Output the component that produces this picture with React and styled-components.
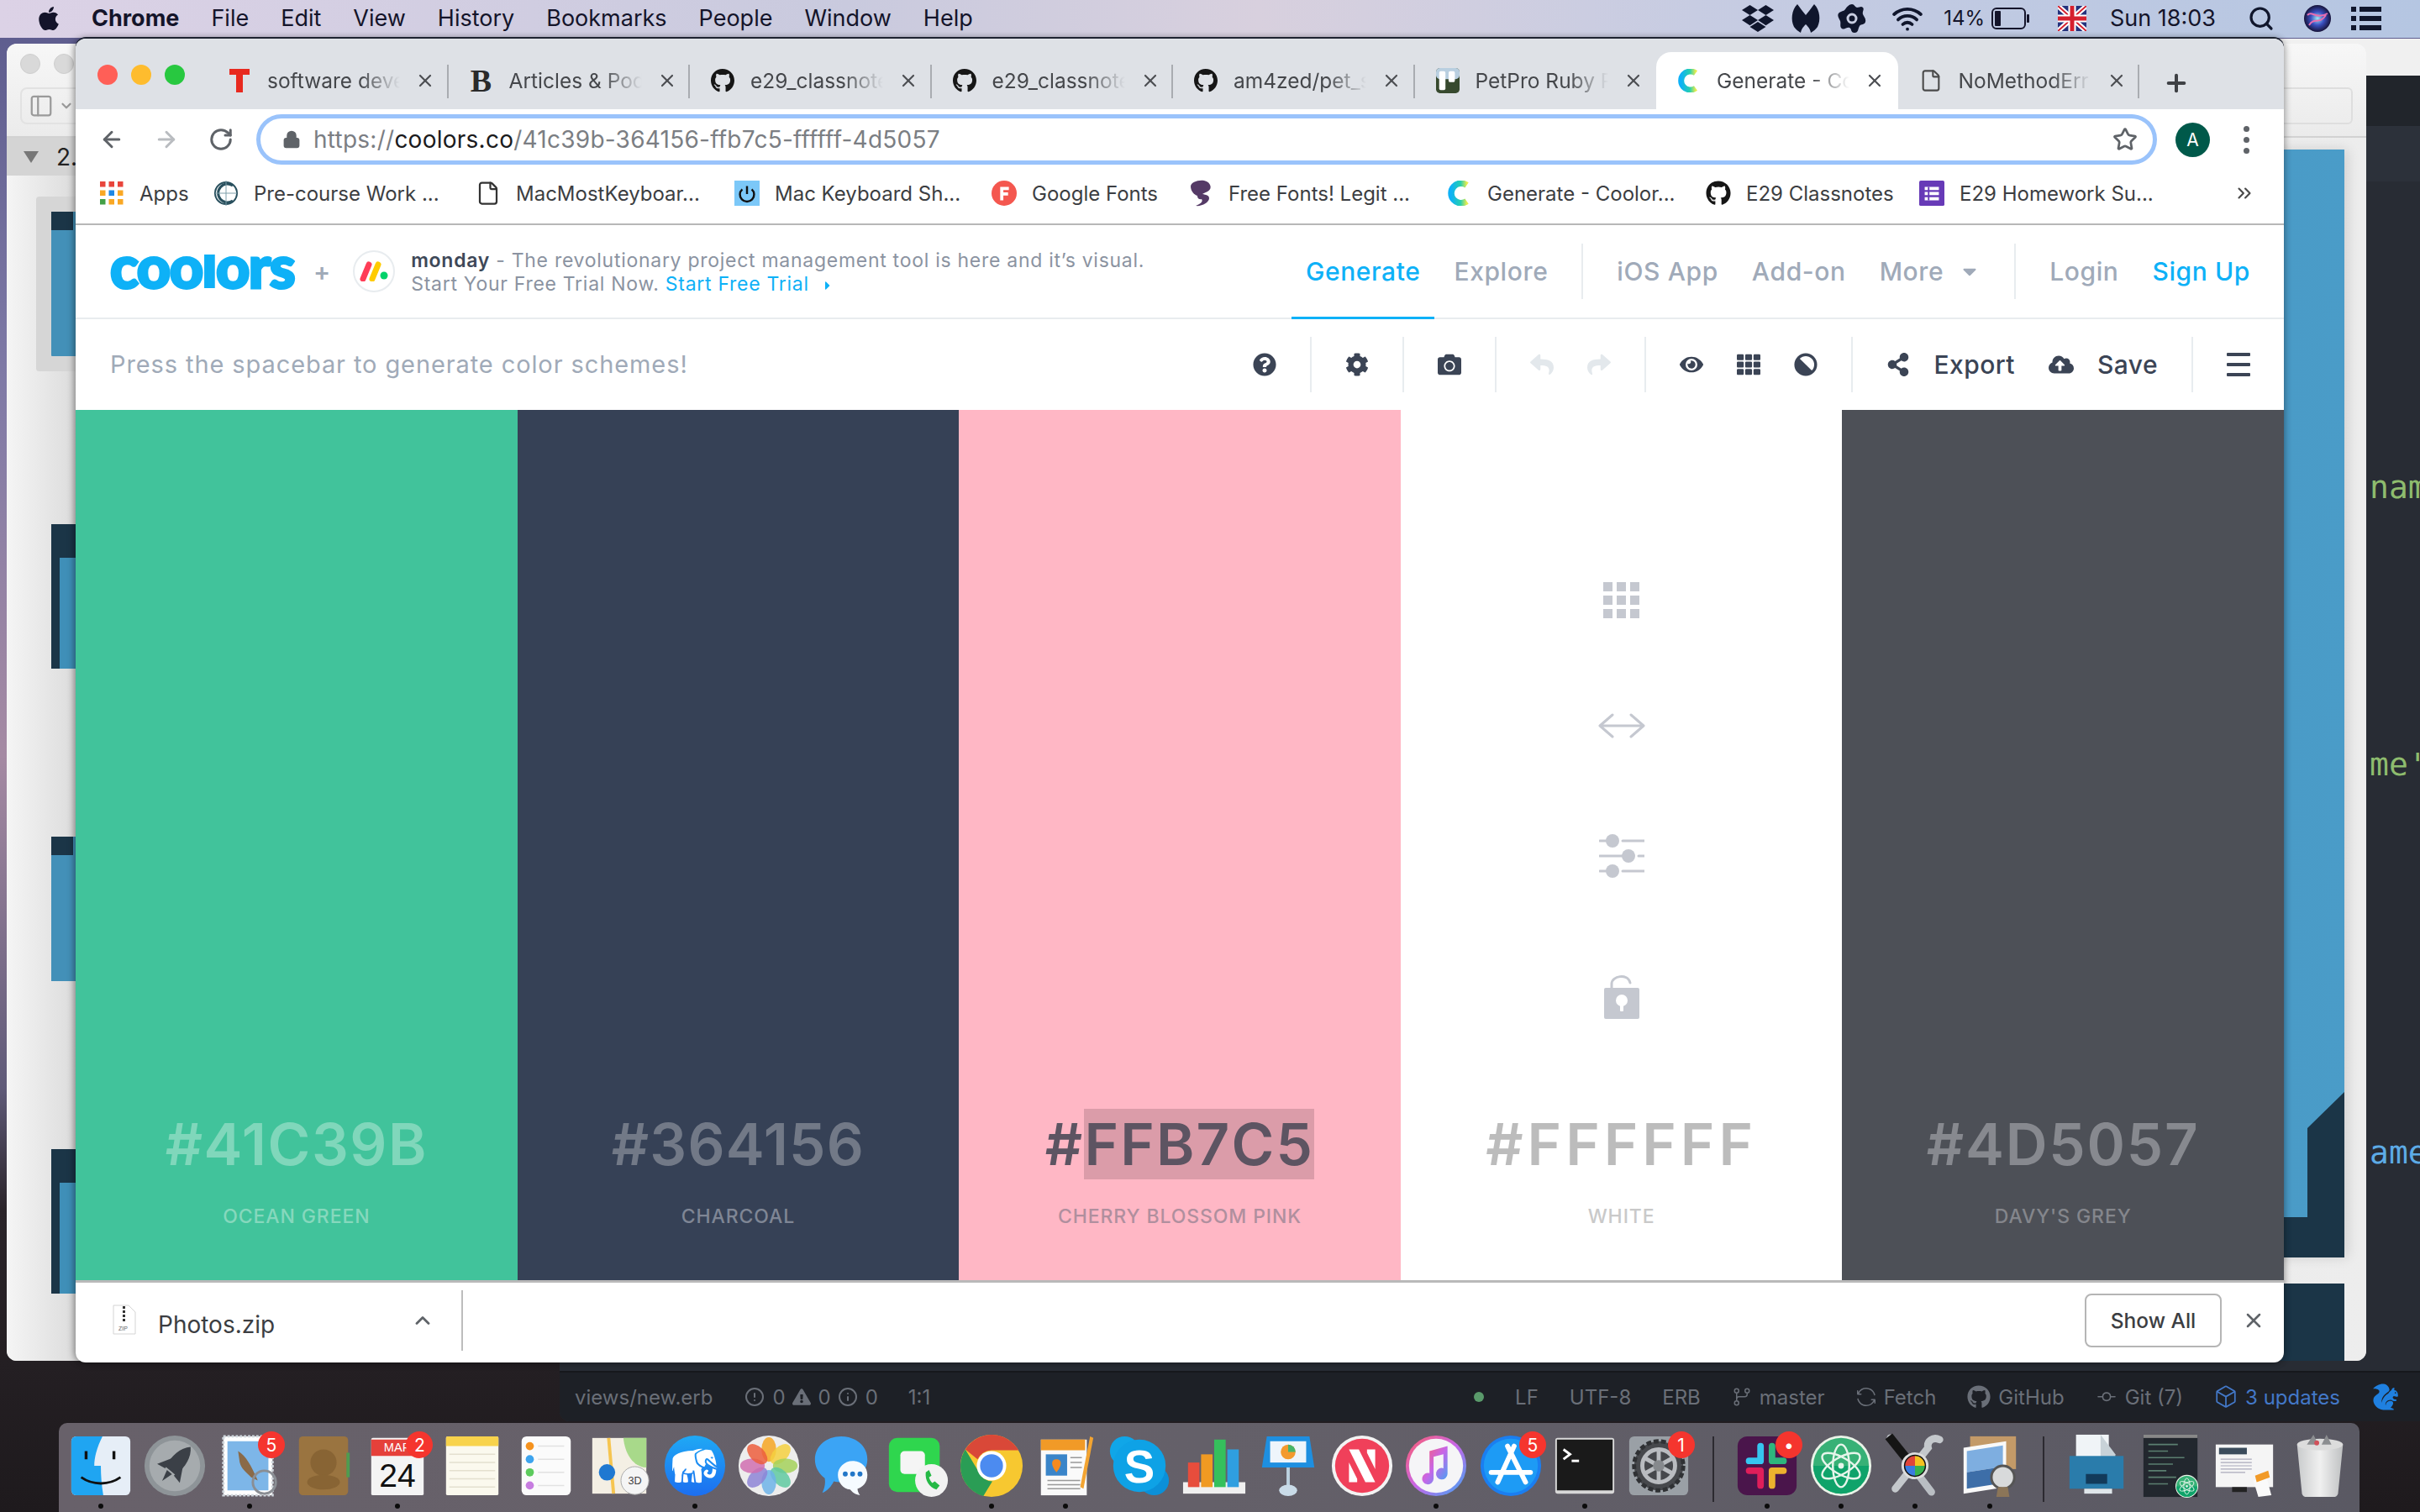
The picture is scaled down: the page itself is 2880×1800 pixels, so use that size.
import React from "react";
import styled, { createGlobalStyle } from "styled-components";
import { ArrowLeft, ArrowRight, RotateCw, Star, Lock, X, Plus, ChevronsRight, ChevronUp, ChevronDown, Search, Wifi, CircleAlert, Info, File, PanelLeft } from "lucide-react";
import { FaApple, FaGithub, FaDropbox, FaQuestionCircle, FaCog, FaCamera, FaReply, FaShare, FaEye, FaTh, FaAdjust, FaShareAlt, FaCloudUploadAlt, FaCaretRight, FaCaretDown, FaExclamationTriangle } from "react-icons/fa";
import { GoGitBranch, GoGitCommit, GoPackage, GoSync } from "react-icons/go";
import { GiSquirrel, GiElephant } from "react-icons/gi";

const UI = `Inter, "Liberation Sans", sans-serif`;
const GOTHAM = `Inter, "Open Sans", sans-serif`;

const GlobalStyle = createGlobalStyle`
  * { box-sizing: border-box; margin: 0; padding: 0; }
  html, body { width: 2880px; height: 1800px; overflow: hidden; background: #1c181b; }
  body { font-family: ${UI}; }
`;

const Desktop = styled.div`
  position: relative;
  width: 2880px;
  height: 1800px;
  overflow: hidden;
  background: linear-gradient(180deg, #5b5a8c 0%, #7f7aa6 25%, #a58aa3 50%, #5f5a78 72%, #2a2429 80%, #1e1a1d 100%);
`;

/* ---------- menu bar ---------- */
const MenuBar = styled.div`
  height: 45px;
  padding: 0 0 2px 42px;
  display: flex;
  align-items: center;
  background: linear-gradient(90deg, #dcd2e6 0%, #c9cade 35%, #d8d0de 52%, #c7cce2 70%, #b5c6e2 100%);
  color: #14142a;
  font-size: 27px;
`;
const MenuItems = styled.div`
  display: flex;
  align-items: center;
  gap: 38px;
  margin-left: 35px;
`;
const MenuItem = styled.span`
  font-weight: ${p => (p.$bold ? 700 : 400)};
`;
const MenuRight = styled.div`
  margin-left: auto;
  display: flex;
  align-items: center;
  padding-right: 46px;
  svg { display: block; }
`;
const Tray = styled.span`
  display: flex;
  align-items: center;
  margin-left: ${p => p.$gap}px;
  font-size: ${p => p.$size || 24}px;
  gap: 8px;
`;

/* ---------- back window (keynote) ---------- */
const BackWindow = styled.div`
  position: absolute;
  left: 8px;
  top: 52px;
  width: 2808px;
  height: 1568px;
  border-radius: 12px;
  overflow: hidden;
  background: #ececec;
  display: flex;
  flex-direction: column;
`;
const BackBar = styled.div`
  height: 112px;
  flex: none;
  background: linear-gradient(180deg, #f7f7f7, #ebebeb);
  border-bottom: 2px solid #d2d2d2;
  padding: 12px 16px 0 16px;
  display: flex;
  justify-content: space-between;
`;
const BackBarLeft = styled.div`
  display: flex;
  flex-direction: column;
  gap: 16px;
`;
const GreyDots = styled.div`
  display: flex;
  gap: 16px;
  span { width: 24px; height: 24px; border-radius: 50%; background: #d9d9d9; border: 1px solid #cecece; }
`;
const ViewButton = styled.div`
  width: 120px;
  height: 44px;
  border: 2px solid #e2e2e2;
  border-radius: 8px;
  display: flex;
  align-items: center;
  padding-left: 8px;
  gap: 6px;
  color: #9a9a9a;
`;
const BackSearch = styled.div`
  width: 130px;
  height: 44px;
  margin-top: 40px;
  border: 2px solid #dedede;
  border-radius: 6px;
`;
const BackBody = styled.div`
  flex: 1;
  display: flex;
  min-height: 0;
`;
const Sidebar = styled.div`
  width: 380px;
  flex: none;
  background: linear-gradient(90deg, #f5f5f5 0, #dcdcdc 82px);
`;
const SidebarBand = styled.div`
  height: 45px;
  background: #d4d4d4;
  display: flex;
  align-items: center;
  padding-left: 20px;
  gap: 21px;
  font-size: 28px;
  color: #222;
`;
const Triangle = styled.span`
  width: 0;
  height: 0;
  border-left: 9px solid transparent;
  border-right: 9px solid transparent;
  border-top: 14px solid #777;
`;
const Thumbs = styled.div`
  padding: 43px 0 0 53px;
  display: flex;
  flex-direction: column;
  gap: 200px;
`;
const Thumb = styled.div`
  position: relative;
  width: 300px;
  height: 172px;
  background: ${p => (p.$dark ? "#1b3547" : "#4390b8")};
  &::before {
    content: "";
    position: absolute;
    inset: ${p => (p.$dark ? "40px 0 0 10px" : "0 auto auto 0")};
    width: ${p => (p.$dark ? "auto" : "26px")};
    height: ${p => (p.$dark ? "auto" : "22px")};
    background: ${p => (p.$dark ? "#3f8fb8" : "#1b3547")};
  }
  ${p => p.$selected && `box-shadow: 0 0 0 18px #d6d6d6; border-radius: 1px;`}
`;
const BackMain = styled.div`
  flex: 1;
  display: flex;
  flex-direction: column;
  align-items: flex-end;
  padding: 14px 26px 0 0;
  gap: 31px;
  background: linear-gradient(90deg, #dcdcdc, #ededed);
`;
const BigSlide = styled.div`
  position: relative;
  width: 1000px;
  height: 1319px;
  flex: none;
  background: linear-gradient(90deg, #3a80a6 0, #3f88ae 85%, #4a9bc7 93%, #4a9cc8 100%);
  box-shadow: 4px 0 14px rgba(0, 0, 0, .12);
`;
const SlideCorner = styled.svg`
  position: absolute;
  right: 0;
  bottom: 0;
`;
const NextSlide = styled.div`
  width: 1000px;
  flex: 1;
  background: #1b3547;
`;

/* ---------- atom window ---------- */
const AtomWindow = styled.div`
  position: absolute;
  left: 666px;
  top: 46px;
  right: 0;
  height: 1646px;
  border-radius: 12px 0 0 12px;
  overflow: hidden;
  background: #282c34;
  display: flex;
  flex-direction: column;
`;
const AtomTitle = styled.div`
  height: 44px;
  background: #f0f0f0;
  flex: none;
`;
const AtomTabs = styled.div`
  height: 60px;
  flex: none;
  background: #21252b;
`;
const AtomPanel = styled.div`
  height: 66px;
  flex: none;
  background: #2c313a;
`;
const Editor = styled.div`
  flex: 1;
  padding-left: 2154px;
  font-family: "DejaVu Sans Mono", monospace;
  font-size: 38px;
  line-height: 48px;
  white-space: nowrap;
`;
const CodeLine = styled.div`
  color: ${p => p.$color};
  margin-top: ${p => p.$top}px;
`;
const StatusBar = styled.div`
  height: 60px;
  flex: none;
  background: #1d2026;
  border-top: 2px solid #16181c;
  color: #6a6f78;
  font-size: 24px;
  display: flex;
  align-items: center;
  padding: 0 24px 0 18px;
  svg { display: block; }
`;
const StatusLeft = styled.div`
  display: flex;
  align-items: center;
  gap: 8px;
`;
const StatusRight = styled.div`
  margin-left: auto;
  display: flex;
  align-items: center;
  gap: 37px;
`;
const StatusItem = styled.span`
  display: flex;
  align-items: center;
  gap: 9px;
  color: ${p => p.$color || "inherit"};
  margin-left: ${p => p.$gap || 0}px;
`;
const GreenDot = styled.span`
  width: 12px;
  height: 12px;
  border-radius: 50%;
  background: #5a9a6b;
`;

/* ---------- chrome window ---------- */
const ChromeWindow = styled.div`
  position: absolute;
  left: 90px;
  top: 46px;
  width: 2628px;
  height: 1576px;
  border-radius: 12px;
  overflow: hidden;
  background: #fff;
  box-shadow: 0 -2px 0 #1d2230, -2px 0 8px rgba(0, 0, 0, .35), 2px 0 8px rgba(0, 0, 0, .2);
  display: flex;
  flex-direction: column;
`;
const TabStrip = styled.div`
  height: 84px;
  flex: none;
  background: #dee1e6;
  padding: 16px 0 0 26px;
  display: flex;
  align-items: flex-end;
`;
const Lights = styled.div`
  display: flex;
  gap: 16px;
  align-self: flex-start;
  margin: 15px 26px 0 0;
`;
const Light = styled.span`
  width: 24px;
  height: 24px;
  border-radius: 50%;
  background: ${p => p.$c};
`;
const Tab = styled.div`
  position: relative;
  width: 287.5px;
  height: 68px;
  flex: none;
  display: flex;
  align-items: center;
  padding-left: 25px;
  font-size: 24.5px;
  color: #45474b;
  background: ${p => (p.$active ? "#fff" : "transparent")};
  border-radius: 18px 18px 0 0;
  &::after {
    content: "";
    display: ${p => (p.$noSep ? "none" : "block")};
    position: absolute;
    right: 0;
    top: 15px;
    height: 40px;
    width: 2px;
    background: #a9acb1;
  }
`;
const TabIcon = styled.span`
  width: 28px;
  height: 32px;
  flex: none;
  display: flex;
  align-items: center;
  justify-content: center;
  margin-right: 19px;
`;
const TabLabel = styled.span`
  width: 158px;
  flex: none;
  overflow: hidden;
  white-space: nowrap;
  -webkit-mask-image: linear-gradient(90deg, #000 70%, transparent 100%);
  mask-image: linear-gradient(90deg, #000 70%, transparent 100%);
`;
const TabClose = styled.span`
  margin-left: 18px;
  display: flex;
  color: #4c4e52;
`;
const NewTab = styled.span`
  align-self: center;
  margin: 6px 0 0 28px;
  display: flex;
  color: #3f4145;
`;

const Toolbar = styled.div`
  height: 72px;
  flex: none;
  display: flex;
  align-items: center;
  padding-left: 28px;
  color: #5f6368;
`;
const NavBtn = styled.span`
  width: ${p => p.$w || 65}px;
  flex: none;
  display: flex;
  color: ${p => (p.$off ? "#b9bcc0" : "#5f6368")};
`;
const AddressBar = styled.div`
  width: 2262px;
  height: 60px;
  flex: none;
  border: 5px solid #9ac3fb;
  border-radius: 30px;
  display: flex;
  align-items: center;
  padding: 0 18px 0 26px;
  font-size: 28px;
  color: #7b7e83;
`;
const Url = styled.span`
  margin-left: 15px;
  letter-spacing: .25px;
  b { font-weight: 400; color: #1b1b1d; }
`;
const AddrStar = styled.span`
  margin-left: auto;
  display: flex;
  color: #5f6368;
`;
const Avatar = styled.span`
  width: 41px;
  height: 41px;
  margin-left: 22px;
  flex: none;
  border-radius: 50%;
  background: #00594a;
  color: #fff;
  font-size: 21px;
  display: flex;
  align-items: center;
  justify-content: center;
`;
const Dots = styled.span`
  margin-left: 40px;
  display: flex;
  flex-direction: column;
  gap: 6px;
  span { width: 7px; height: 7px; border-radius: 50%; background: #5f6368; }
`;

const Bookmarks = styled.div`
  height: 66px;
  flex: none;
  border-bottom: 2px solid #b7b7b7;
  padding: 0 0 8px 28px;
  display: flex;
  align-items: center;
  font-size: 24px;
  color: #3c3e42;
`;
const Bookmark = styled.span`
  width: ${p => p.$w}px;
  flex: none;
  display: flex;
  align-items: center;
  white-space: nowrap;
`;
const BookmarkIcon = styled.span`
  width: 30px;
  height: 32px;
  flex: none;
  display: flex;
  align-items: center;
  justify-content: center;
  margin-right: 18px;
`;
const More = styled.span`
  margin-left: auto;
  margin-right: 34px;
  display: flex;
`;

/* ---------- coolors ---------- */
const Header = styled.div`
  height: 112px;
  flex: none;
  display: flex;
  align-items: center;
  padding: 0 40px 0 41px;
  border-bottom: 2px solid #e8ecef;
`;
const Logo = styled.div`
  font-family: Lato, sans-serif;
  font-weight: 900;
  font-size: 70px;
  line-height: 1;
  width: 218px;
  color: #0eb1f7;
  -webkit-text-stroke: 3px #0eb1f7;
  letter-spacing: -1.5px;
  white-space: nowrap;
  margin-top: -14px;
`;
const LogoL = styled.span`
  display: inline-block;
  transform: scaleY(.72);
  transform-origin: 50% 85%;
`;
const Join = styled.span`
  margin: 0 27px 0 24px;
  color: #a0aab8;
  font-size: 30px;
  font-weight: 600;
`;
const MondayBadge = styled.span`
  width: 50px;
  height: 50px;
  flex: none;
  border: 2px solid #e8ecef;
  border-radius: 50%;
  display: flex;
  align-items: center;
  justify-content: center;
`;
const Promo = styled.div`
  margin: 2px 0 0 19px;
  font-family: ${GOTHAM};
  font-size: 23px;
  line-height: 28px;
  letter-spacing: .72px;
  color: #8b93a1;
  b { color: #3e4858; font-weight: 600; }
`;
const PromoLink = styled.span`
  color: #0eb1f7;
  svg { margin-left: 14px; vertical-align: -2px; }
`;
const Nav = styled.nav`
  margin-left: auto;
  align-self: stretch;
  display: flex;
  align-items: center;
  gap: 40px;
  font-family: ${GOTHAM};
  font-size: 30px;
  font-weight: 500;
  letter-spacing: .6px;
  color: #a0aab9;
`;
const NavLink = styled.span`
  color: ${p => (p.$blue ? "#0eb1f7" : "inherit")};
  display: flex;
  align-items: center;
  gap: 18px;
`;
const NavActive = styled.span`
  align-self: stretch;
  margin: 0 -17px -2px 0;
  padding: 0 17px;
  border-bottom: 3px solid #0eb1f7;
  color: #0eb1f7;
  display: flex;
  align-items: center;
`;
const NavDivider = styled.span`
  width: 2px;
  height: 66px;
  background: #e8ecef;
`;

const ActionBar = styled.div`
  height: 108px;
  flex: none;
  display: flex;
  align-items: center;
  padding-left: 41px;
`;
const Hint = styled.span`
  font-family: ${GOTHAM};
  font-size: 29px;
  color: #a0aab8;
  letter-spacing: .9px;
  margin-top: -2px;
`;
const Actions = styled.div`
  margin-left: auto;
  display: flex;
  align-items: center;
  color: #3b4455;
  font-family: ${GOTHAM};
  font-size: 30px;
  font-weight: 500;
  letter-spacing: .45px;
`;
const Group = styled.div`
  display: flex;
  align-items: center;
  gap: ${p => p.$gap || 0}px;
  padding: 0 40px;
  height: 66px;
  border-left: ${p => (p.$first ? "none" : "2px solid #e8ecef")};
  color: ${p => (p.$off ? "#e3e8ec" : "inherit")};
  svg { display: block; flex: none; }
`;
const ActionLabel = styled.span`
  display: flex;
  align-items: center;
  gap: 28px;
`;
const Contrast = styled(FaAdjust)`
  transform: rotate(-45deg);
`;
const Burger = styled.span`
  display: flex;
  flex-direction: column;
  gap: 8px;
  span { width: 28px; height: 4px; border-radius: 1px; background: #3b4455; }
`;

const Palette = styled.div`
  flex: 1;
  min-height: 0;
  display: flex;
`;
const Swatch = styled.div`
  flex: 1;
  background: ${p => p.$bg};
  display: flex;
  flex-direction: column;
  align-items: center;
  justify-content: flex-end;
  padding-bottom: 64px;
  font-family: ${GOTHAM};
`;
const Tools = styled.div`
  display: flex;
  flex-direction: column;
  align-items: center;
  gap: 113px;
  margin-bottom: 109px;
  svg { display: block; }
`;
const Hex = styled.div`
  font-size: 69px;
  font-weight: 600;
  line-height: 80px;
  letter-spacing: ${p => p.$track}px;
  color: ${p => p.$fg};
`;
const Selected = styled.span`
  background: ${p => (p.$on ? "#db9ca9" : "transparent")};
`;
const ColorName = styled.div`
  margin-top: 34px;
  font-size: 23px;
  line-height: 24px;
  font-weight: 500;
  letter-spacing: .9px;
  color: ${p => p.$fg};
`;

const Shelf = styled.div`
  height: 98px;
  flex: none;
  border-top: 3px solid #b9b9b9;
  display: flex;
  align-items: center;
  padding: 0 22px 0 44px;
  color: #3c3e42;
`;
const ZipIcon = styled.span`
  width: 28px;
  display: flex;
  margin-top: -8px;
`;
const FileName = styled.span`
  font-size: 28px;
  margin: 5px 0 0 26px;
`;
const ShelfChevron = styled.span`
  margin-left: 162px;
  margin-top: -6px;
  display: flex;
  color: #5f6368;
`;
const ShelfDivider = styled.span`
  width: 2px;
  height: 72px;
  margin: -6px 0 0 32px;
  background: #bdbdbd;
`;
const ShowAll = styled.span`
  margin-left: auto;
  width: 163px;
  height: 64px;
  border: 2px solid #b5b5b5;
  border-radius: 8px;
  display: flex;
  align-items: center;
  justify-content: center;
  font-size: 24.5px;
  font-weight: 500;
  margin-top: -6px;
`;
const ShelfClose = styled.span`
  margin: -6px 0 0 24px;
  display: flex;
  color: #5f6368;
`;

/* ---------- dock ---------- */
const Dock = styled.div`
  position: absolute;
  left: 70px;
  bottom: 0;
  width: 2738px;
  height: 106px;
  border-radius: 10px 10px 0 0;
  background: linear-gradient(90deg, #68616a 0%, #646069 50%, #5a5963 100%);
  padding: 12px 0 0 6px;
  display: flex;
`;
const DockCell = styled.div`
  position: relative;
  width: 88.3px;
  flex: none;
  display: flex;
  flex-direction: column;
  align-items: center;
  svg { display: block; }
`;
const RunDot = styled.span`
  width: 6px;
  height: 6px;
  border-radius: 50%;
  margin-top: 6px;
  background: ${p => (p.$on ? "#0b0b0b" : "transparent")};
`;
const Badge = styled.span`
  position: absolute;
  top: -2px;
  right: 2px;
  width: 32px;
  height: 32px;
  border-radius: 50%;
  background: #f5352e;
  color: #fff;
  font-size: 21px;
  display: flex;
  align-items: center;
  justify-content: center;
`;
const DockDivider = styled.span`
  width: 2px;
  height: 78px;
  margin: 4px 19px 0;
  flex: none;
  background: #2c2a30;
`;

/* ---------- drawings ---------- */
const Icon = ({ children, s = 78, style }) => (
  <svg width={s} height={s} viewBox="0 0 80 80" style={style}>{children}</svg>
);

const CoolorsMark = ({ s = 28 }) => (
  <svg width={s} height={s} viewBox="0 0 28 28">
    <defs>
      <linearGradient id="cm" x1="0" x2="1" y1="0" y2="0">
        <stop offset="0" stopColor="#0eb1f7" />
        <stop offset=".6" stopColor="#26cfae" />
        <stop offset="1" stopColor="#e9ec4f" />
      </linearGradient>
    </defs>
    <path d="M22 5 A11 11 0 1 0 22 23" fill="none" stroke="url(#cm)" strokeWidth="7" />
  </svg>
);
const RedT = () => (
  <svg width="24" height="28" viewBox="0 0 24 28">
    <path d="M0 0h24v7h-8v21H8V7H0z" fill="#e8291f" />
  </svg>
);
const SerifB = () => <span style={{ fontFamily: "Liberation Serif, serif", fontWeight: 700, fontSize: 38, lineHeight: 1, color: "#2a2a2a" }}>B</span>;
const PetPro = () => (
  <svg width="30" height="32" viewBox="0 0 30 32">
    <rect width="30" height="32" rx="5" fill="#37492e" />
    <rect width="30" height="14" rx="5" fill="#b9cfe0" />
    <rect x="4" y="4" width="8" height="24" rx="2" fill="#fff" />
    <rect x="16" y="4" width="8" height="14" rx="2" fill="#fff" />
  </svg>
);
const Bird = () => (
  <svg width="30" height="34" viewBox="0 0 30 34">
    <path d="M3 9C3 2 22 -2 26 7c3 7-5 9-9 11 4 1 8 1 8 5 0 5-9 10-16 9 6-2 9-5 7-8-4 1-5-2-5-4-4-1-8-6-8-11z" fill="#553a66" />
  </svg>
);
const CRing = () => (
  <svg width="30" height="34" viewBox="0 0 30 34">
    <circle cx="15" cy="17" r="13" fill="none" stroke="#29505e" strokeWidth="2" />
    <path d="M23 8a11 11 0 1 0 0 18" fill="none" stroke="#29505e" strokeWidth="3" />
    <path d="M15 2v30M2 17h26" stroke="#7fa0aa" strokeWidth="1" />
  </svg>
);
const AppsGrid = () => (
  <svg width="28" height="28" viewBox="0 0 28 28">
    {[
      ["#e8453c", "#e8453c", "#e8453c"],
      ["#f9a825", "#1e88e5", "#f9a825"],
      ["#43a047", "#f9a825", "#f9a825"],
    ].map((row, r) => row.map((c, i) => <rect key={`${r}${i}`} x={i * 10.5} y={r * 10.5} width="6.5" height="6.5" fill={c} />))}
  </svg>
);
const PowerTile = () => (
  <svg width="32" height="32" viewBox="0 0 32 32">
    <rect width="32" height="32" fill="#7cc8f8" />
    <path d="M10 11a9 9 0 1 0 12 0M16 7v10" fill="none" stroke="#111" strokeWidth="2.6" />
  </svg>
);
const GoogleF = () => (
  <svg width="32" height="32" viewBox="0 0 32 32">
    <circle cx="16" cy="16" r="16" fill="#f4574f" />
    <path d="M11 8h11v4h-7v3h6v4h-6v6h-4z" fill="#fff" />
  </svg>
);
const FormsTile = () => (
  <svg width="32" height="32" viewBox="0 0 32 32">
    <rect width="32" height="32" rx="2" fill="#673ab7" />
    <path d="M7 8h18v4H7zM7 14.500h18v4H7zM7 21h18v4H7z" fill="#fff" />
    <path d="M11 8h2v17h-2z" fill="#673ab7" />
  </svg>
);
const Monday = () => (
  <svg width="34" height="24" viewBox="0 0 34 24">
    <path d="M4 21L11 4" stroke="#ff3d57" strokeWidth="7" strokeLinecap="round" />
    <path d="M15 21L22 4" stroke="#ffcb00" strokeWidth="7" strokeLinecap="round" />
    <circle cx="29" cy="17" r="4.500" fill="#00d26a" />
  </svg>
);
const UkFlag = () => (
  <svg width="34" height="30" viewBox="0 0 34 30">
    <rect width="34" height="30" fill="#24327d" />
    <path d="M0 0L34 30M34 0L0 30" stroke="#fff" strokeWidth="6" />
    <path d="M0 0L34 30M34 0L0 30" stroke="#d5202e" strokeWidth="2" />
    <path d="M17 0v30M0 15h34" stroke="#fff" strokeWidth="9" />
    <path d="M17 0v30M0 15h34" stroke="#d5202e" strokeWidth="5" />
  </svg>
);
const Malware = () => (
  <svg width="36" height="36" viewBox="0 0 36 36">
    <path d="M8 1C1 8 0 20 4 28c2 3 5 5 8 7 1-5 3-7 6-10 3 3 5 5 6 10 3-2 6-4 8-7 4-8 3-20-4-27-3 4-6 8-10 13C14 9 11 5 8 1z" fill="#10162c" />
  </svg>
);
const Avast = () => (
  <svg width="34" height="36" viewBox="0 0 34 36">
    <path d="M17 1c3 0 3 3 6 4 3 0 5-2 7 0s-1 5 0 8 4 5 3 9-5 2-7 5-1 8-6 8-3-5-6-6-6 3-9 1-1-6-2-9-4-6-2-9 6-2 8-5 5-6 8-6z" fill="#10162c" />
    <circle cx="17" cy="18" r="5" fill="none" stroke="#c8cde0" strokeWidth="3" />
  </svg>
);
const Battery = () => (
  <svg width="46" height="26" viewBox="0 0 46 26">
    <rect x="1" y="1" width="39" height="24" rx="5" fill="none" stroke="#14142a" strokeWidth="2" />
    <rect x="4" y="4" width="7" height="18" rx="1" fill="#14142a" />
    <rect x="42" y="8" width="3" height="10" rx="1" fill="#14142a" />
  </svg>
);
const Siri = () => (
  <svg width="32" height="32" viewBox="0 0 32 32">
    <defs>
      <radialGradient id="si"><stop offset="0" stopColor="#9fe8f4" /><stop offset=".5" stopColor="#3a4fc0" /><stop offset="1" stopColor="#17133a" /></radialGradient>
    </defs>
    <circle cx="16" cy="16" r="16" fill="url(#si)" />
    <path d="M4 12c6-6 10 6 24-2M6 24c6-10 12 0 20-12" stroke="#e86fb0" strokeWidth="2" fill="none" />
  </svg>
);
const ListIcon = () => (
  <svg width="36" height="30" viewBox="0 0 36 30">
    <path d="M0 1h6v6H0zM10 1h26v6H10zM0 12h6v6H0zM10 12h26v6H10zM0 23h6v6H0zM10 23h26v6H10z" fill="#10162c" />
  </svg>
);
const ZipFile = () => (
  <svg width="28" height="36" viewBox="0 0 28 36">
    <path d="M1 1h18l8 8v26H1z" fill="#fff" stroke="#d4d4d4" />
    <path d="M12 2h3v3h-3zM12 7h3v3h-3zM12 12h3v3h-3zM12 17h3v3h-3z" fill="#333" />
    <text x="7" y="31" fontSize="7" fill="#666" fontFamily="Liberation Sans">ZIP</text>
  </svg>
);

/* white colour column tools */
const GridTool = () => (
  <svg width="43" height="43" viewBox="0 0 43 43" fill="#c5c8d0">
    {[0, 16, 32].map(y => [0, 16, 32].map(x => <rect key={`${x}${y}`} x={x} y={y} width="11" height="11" />))}
  </svg>
);
const WidthTool = () => (
  <svg width="56" height="30" viewBox="0 0 56 30" fill="none" stroke="#c5c8d0" strokeWidth="3" strokeLinecap="round" strokeLinejoin="round">
    <path d="M2 15h52M17 2L2 15l15 13M39 2l15 13-15 13" />
  </svg>
);
const SlidersTool = () => (
  <svg width="54" height="54" viewBox="0 0 54 54" fill="#c5c8d0" stroke="#c5c8d0" strokeLinecap="round">
    <path d="M1 9h9M28 9h26M1 27h30M47 27h7M1 45h9M28 45h26" strokeWidth="3" />
    <circle cx="16" cy="9" r="8" stroke="none" />
    <circle cx="35" cy="27" r="8" stroke="none" />
    <circle cx="16" cy="45" r="8" stroke="none" />
  </svg>
);
const LockTool = () => (
  <svg width="42" height="54" viewBox="0 0 42 54">
    <path d="M9 18V12C9 3 28 -1 31 11" fill="none" stroke="#c5c8d0" strokeWidth="3" strokeLinecap="round" />
    <rect x="0" y="17" width="42" height="37" rx="2" fill="#c5c8d0" />
    <circle cx="21" cy="32" r="7" fill="#fff" />
    <rect x="19" y="34" width="4" height="11" rx="1" fill="#fff" />
  </svg>
);

/* dock icons */
const Finder = () => (
  <Icon>
    <rect x="4" y="4" width="72" height="72" rx="6" fill="#e6eef7" />
    <path d="M10 4h32c-7 14-10 26-10 36h8c0 12 1 24 3 36H10a6 6 0 0 1-6-6V10a6 6 0 0 1 6-6z" fill="#1fa5f2" />
    <path d="M22 22v10M56 22v10" stroke="#111" strokeWidth="3.500" />
    <path d="M16 54c14 10 34 10 48 0" fill="none" stroke="#111" strokeWidth="3" />
  </Icon>
);
const Launchpad = () => (
  <Icon>
    <circle cx="40" cy="40" r="37" fill="#8e9498" />
    <circle cx="40" cy="40" r="31" fill="#a6abae" />
    <g transform="rotate(40 40 40)" fill="#3b4047">
      <path d="M40 10c9 9 11 22 8 38H32c-3-16-1-29 8-38z" />
      <path d="M32 34L22 52l11-2zM48 34l10 18-11-2z" />
      <path d="M36 50h8l-4 14z" />
    </g>
  </Icon>
);
const MailIcon = () => (
  <Icon>
    <rect x="8" y="4" width="60" height="72" fill="#fff" stroke="#cfd6dc" strokeDasharray="3 2" strokeWidth="3" />
    <rect x="13" y="10" width="50" height="60" fill="#7db6e8" />
    <path d="M26 22c10 6 16 18 24 36l-8-4c-6-6-12-10-14-18z" fill="#8a6a48" />
    <circle cx="58" cy="60" r="14" fill="none" stroke="#8a8e94" strokeWidth="3" />
  </Icon>
);
const Contacts = () => (
  <Icon>
    <rect x="10" y="4" width="60" height="72" rx="5" fill="#9a7440" />
    <rect x="68" y="24" width="4" height="30" fill="#4e9c50" />
    <circle cx="40" cy="36" r="16" fill="#886434" />
    <ellipse cx="40" cy="60" rx="20" ry="9" fill="#886434" />
  </Icon>
);
const Calendar = () => (
  <Icon>
    <rect x="8" y="6" width="64" height="70" rx="2" fill="#f4f4f4" />
    <path d="M8 8h64v20H8z" fill="#e5403a" />
    <text x="40" y="23" fontSize="15" textAnchor="middle" fill="#fff" fontFamily="Liberation Sans">MAR</text>
    <text x="40" y="66" fontSize="40" textAnchor="middle" fill="#111" fontFamily="Liberation Sans">24</text>
  </Icon>
);
const Notes = () => (
  <Icon>
    <rect x="8" y="4" width="64" height="72" rx="2" fill="#fbf9ee" />
    <path d="M8 6a2 2 0 0 1 2-2h60a2 2 0 0 1 2 2v10H8z" fill="#f8d34c" />
    <path d="M12 26h56M12 36h56M12 46h56M12 56h56M12 66h56" stroke="#e4e0cf" strokeWidth="1.500" />
  </Icon>
);
const Reminders = () => (
  <Icon>
    <rect x="10" y="4" width="60" height="72" rx="6" fill="#fbfbfb" />
    {[["#f5921e", 16], ["#3da4ee", 32], ["#5dcb5d", 48], ["#c77de0", 64]].map(([c, y]) => (
      <circle key={c} cx="20" cy={y} r="5" fill={c} />
    ))}
    <path d="M30 16h32M30 32h32M30 48h32M30 64h32" stroke="#e2e2e2" strokeWidth="1.500" />
  </Icon>
);
const MapsIcon = () => (
  <Icon>
    <rect x="6" y="6" width="66" height="68" fill="#f4efe4" />
    <path d="M44 6h28v36c-14 0-26-14-28-36z" fill="#a8d98a" />
    <path d="M26 6l6 68" stroke="#f6c550" strokeWidth="4" />
    <circle cx="24" cy="48" r="10" fill="#1f78d1" />
    <circle cx="58" cy="58" r="17" fill="#f5f5f5" stroke="#aaa" />
    <text x="58" y="63" fontSize="13" textAnchor="middle" fill="#444" fontFamily="Liberation Sans">3D</text>
  </Icon>
);
const TablePlus = () => (
  <Icon>
    <defs><linearGradient id="tp" x1="0" x2="0" y1="0" y2="1"><stop offset="0" stopColor="#1fa9f5" /><stop offset="1" stopColor="#1c6ef0" /></linearGradient></defs>
    <circle cx="40" cy="40" r="37" fill="url(#tp)" />
    <foreignObject x="10" y="10" width="60" height="60"><GiElephant size={60} color="#fff" /></foreignObject>
  </Icon>
);
const Photos = () => (
  <Icon>
    <circle cx="40" cy="40" r="37" fill="#ededed" />
    {["#f6a623", "#f4d03f", "#a5d15a", "#5fc9a0", "#6db3e8", "#8d84d6", "#d06fb0", "#ec5e3d"].map((c, i) => (
      <ellipse key={c} cx="40" cy="20" rx="9" ry="15" fill={c} fillOpacity=".85" transform={`rotate(${i * 45} 40 40)`} />
    ))}
  </Icon>
);
const Messages = () => (
  <Icon>
    <path d="M38 4c18 0 32 12 32 28S56 60 38 60c-3 0-6 0-9-1-3 6-8 12-14 14 3-6 4-12 3-18C10 49 6 41 6 32 6 16 20 4 38 4z" fill="#3ba4f5" />
    <path d="M52 34c10 0 18 7 18 17s-6 15-12 17c0 3 1 5 3 8-5-1-9-3-12-7-9-1-15-9-15-18s8-17 18-17z" fill="#f6fbff" />
    <circle cx="43" cy="50" r="3" fill="#2277c8" /><circle cx="52" cy="50" r="3" fill="#2277c8" /><circle cx="61" cy="50" r="3" fill="#2277c8" />
  </Icon>
);
const FaceTime = () => (
  <Icon>
    <rect x="6" y="6" width="62" height="66" rx="10" fill="#2fd64e" />
    <rect x="20" y="22" width="30" height="28" rx="5" fill="#f5f5f5" />
    <circle cx="58" cy="58" r="20" fill="#f2f2f2" />
    <path d="M51 48c-1 10 4 18 13 21l4-5-6-5-3 2c-2-2-3-4-4-7l3-2-3-7z" fill="#25b946" />
  </Icon>
);
const ChromeIcon = () => (
  <Icon>
    <circle cx="40" cy="40" r="38" fill="#f7c830" />
    <path d="M40 2a38 38 0 0 1 33 19H40a19 19 0 0 0-17 11L8 20A38 38 0 0 1 40 2z" fill="#d94838" />
    <path d="M8 20l16 27a19 19 0 0 0 17 12L30 77A38 38 0 0 1 8 20z" fill="#2a9d55" />
    <circle cx="40" cy="40" r="18" fill="#fff" />
    <circle cx="40" cy="40" r="14" fill="#4c8bf0" />
  </Icon>
);
const PagesIcon = () => (
  <Icon>
    <rect x="10" y="8" width="56" height="68" fill="#fafafa" />
    <path d="M10 8h54v13H10z" fill="#f19a27" />
    <rect x="16" y="26" width="26" height="26" fill="#3a85c9" />
    <path d="M29 32c6 0 8 6 0 16-8-10-6-16 0-16z" fill="#f58a1f" />
    <path d="M18 58h40M18 63h40M18 68h40M46 30h14M46 36h14M46 42h14" stroke="#999" strokeWidth="1.500" />
    <path d="M70 4l4 2-12 62-4-2z" fill="#f3a431" />
  </Icon>
);
const SkypeIcon = () => (
  <Icon>
    <circle cx="22" cy="22" r="18" fill="#10a6e8" /><circle cx="58" cy="58" r="18" fill="#0b90d8" />
    <circle cx="40" cy="40" r="32" fill="#0ea2e6" />
    <text x="40" y="60" fontSize="56" fontWeight="700" textAnchor="middle" fill="#fff" fontFamily="Liberation Sans">S</text>
  </Icon>
);
const NumbersIcon = () => (
  <Icon>
    <rect x="2" y="60" width="76" height="14" fill="#f0f0f0" />
    <rect x="8" y="36" width="14" height="30" fill="#e74d3c" />
    <rect x="24" y="26" width="14" height="40" fill="#f09a22" />
    <rect x="40" y="8" width="14" height="58" fill="#35c05c" />
    <rect x="56" y="20" width="14" height="46" fill="#2f9fe0" />
  </Icon>
);
const KeynoteIcon = () => (
  <Icon>
    <path d="M14 4h52l6 38H8z" fill="#1e8fe0" />
    <rect x="18" y="10" width="44" height="26" fill="#eef5fb" />
    <circle cx="40" cy="23" r="9" fill="#f39a2e" />
    <path d="M40 14a9 9 0 0 1 9 9h-9z" fill="#46b56a" />
    <rect x="38" y="42" width="4" height="28" fill="#bcd2e0" />
    <ellipse cx="40" cy="70" rx="11" ry="7" fill="#c9dbe8" />
  </Icon>
);
const NewsIcon = () => (
  <Icon>
    <circle cx="40" cy="40" r="37" fill="#f3f3f3" />
    <circle cx="40" cy="40" r="33" fill="#f0405a" />
    <path d="M24 20l12 0 20 40-12 0zM24 36v24h10V56zM56 20v24l-10-20v-4z" fill="#fff" />
  </Icon>
);
const MusicIcon = () => (
  <Icon>
    <defs><linearGradient id="mu" x1="0" x2="1" y1="0" y2="1"><stop offset="0" stopColor="#ff5d6c" /><stop offset=".5" stopColor="#c766e8" /><stop offset="1" stopColor="#3aa8f4" /></linearGradient></defs>
    <circle cx="40" cy="40" r="37" fill="url(#mu)" />
    <circle cx="40" cy="40" r="33" fill="#f5f5f7" />
    <path d="M32 22l22-6v34a7 7 0 1 1-5-7V26l-12 3v27a7 7 0 1 1-5-7z" fill="url(#mu)" />
  </Icon>
);
const AppStore = () => (
  <Icon>
    <circle cx="40" cy="40" r="37" fill="#1b7ef0" />
    <circle cx="40" cy="40" r="33" fill="#1d9bf5" />
    <path d="M44 16L24 60M36 16l22 44M16 48h48" stroke="#fff" strokeWidth="6" strokeLinecap="round" />
  </Icon>
);
const Terminal = () => (
  <Icon>
    <rect x="4" y="6" width="72" height="68" rx="3" fill="#d8d8d8" />
    <rect x="6" y="8" width="68" height="62" fill="#1a1a1a" />
    <path d="M14 20l8 6-8 6" fill="none" stroke="#fff" strokeWidth="3" />
    <path d="M24 34h9" stroke="#fff" strokeWidth="3" />
  </Icon>
);
const SysPrefs = () => (
  <Icon>
    <rect x="4" y="4" width="72" height="72" rx="6" fill="#9aa0a6" />
    <circle cx="40" cy="40" r="30" fill="#46484c" stroke="#2f3134" strokeWidth="5" strokeDasharray="6 3" />
    <circle cx="40" cy="40" r="20" fill="none" stroke="#b9bcc0" strokeWidth="5" />
    <path d="M40 20v40M22 30l36 20M58 30L22 50" stroke="#b9bcc0" strokeWidth="5" />
    <circle cx="40" cy="40" r="7" fill="#86898d" />
  </Icon>
);
const Slack = () => (
  <Icon>
    <rect x="4" y="4" width="72" height="72" rx="12" fill="#4a154b" />
    <path d="M32 16v18M18 34h14" stroke="#36c5f0" strokeWidth="8" strokeLinecap="round" fill="none" />
    <path d="M46 16v18M46 34h14" stroke="#2eb67d" strokeWidth="8" strokeLinecap="round" fill="none" />
    <path d="M32 46v18M18 46h14" stroke="#e01e5a" strokeWidth="8" strokeLinecap="round" fill="none" />
    <path d="M46 46v18M46 46h14" stroke="#ecb22e" strokeWidth="8" strokeLinecap="round" fill="none" />
  </Icon>
);
const AtomIcon = ({ s = 78 }) => (
  <Icon s={s}>
    <circle cx="40" cy="40" r="37" fill="#eaf4e8" />
    <circle cx="40" cy="40" r="34" fill="#37b176" />
    <path d="M6 40a34 34 0 0 0 68 0z" fill="#0fa36a" />
    <g fill="none" stroke="#e6f5ea" strokeWidth="2.500">
      <ellipse cx="40" cy="40" rx="10" ry="26" />
      <ellipse cx="40" cy="40" rx="10" ry="26" transform="rotate(60 40 40)" />
      <ellipse cx="40" cy="40" rx="10" ry="26" transform="rotate(-60 40 40)" />
    </g>
    <circle cx="40" cy="40" r="3.500" fill="#e6f5ea" />
  </Icon>
);
const ColorSync = () => (
  <Icon>
    <path d="M10 6l50 66" stroke="#b9bec3" strokeWidth="9" strokeLinecap="round" />
    <path d="M70 8c-8-4-16 2-14 10L16 68" stroke="#c4c8cc" strokeWidth="9" strokeLinecap="round" fill="none" />
    <path d="M8 4l24 30" stroke="#151515" strokeWidth="11" />
    <circle cx="40" cy="40" r="15" fill="#111" stroke="#ddd" strokeWidth="3" />
    <path d="M40 40V28a12 12 0 0 1 12 12z" fill="#f4c21f" />
    <path d="M40 40h12a12 12 0 0 1-12 12z" fill="#37b24d" />
    <path d="M40 40v12a12 12 0 0 1-12-12z" fill="#3a7be0" />
    <path d="M40 40H28a12 12 0 0 1 12-12z" fill="#e0443a" />
  </Icon>
);
const Preview = () => (
  <Icon>
    <rect x="16" y="4" width="56" height="40" fill="#c39a68" />
    <path d="M8 18l52-8v56L8 74z" fill="#f9f9f9" />
    <path d="M12 22l44-7v26L12 48z" fill="#7eaee0" />
    <path d="M12 48l44-7v20L12 68z" fill="#3d6ea8" />
    <circle cx="56" cy="54" r="14" fill="#d8dadb" stroke="#555" strokeWidth="3" />
    <path d="M50 66l12 0 2 12H48z" fill="#8b7558" />
  </Icon>
);
const CodeDoc = () => (
  <Icon>
    <rect x="14" y="2" width="40" height="40" fill="#f0f4f7" />
    <path d="M44 2l18 24v10H44z" fill="#c8d2d8" />
    <rect x="6" y="28" width="66" height="40" fill="#2a7cab" />
    <rect x="26" y="50" width="26" height="12" fill="#123a5a" />
    <rect x="24" y="68" width="34" height="6" fill="#dfe6ea" />
  </Icon>
);
const AtomDoc = () => (
  <Icon>
    <rect x="6" y="2" width="66" height="76" fill="#22272e" />
    <rect x="6" y="2" width="66" height="4" fill="#888" />
    <path d="M12 14h36M12 22h24M12 30h44M12 38h30M12 46h22M12 54h34M12 62h24" stroke="#5b7f70" strokeWidth="1.600" />
    <foreignObject x="44" y="50" width="32" height="30"><AtomIcon s={30} /></foreignObject>
  </Icon>
);
const SheetDoc = () => (
  <Icon>
    <rect x="4" y="14" width="70" height="52" fill="#f5f5f5" />
    <rect x="8" y="18" width="34" height="8" fill="#3b4c5c" />
    <path d="M10 32h38M10 36h38M10 40h38M10 44h38M10 48h30" stroke="#aab" strokeWidth="1.200" />
    <rect x="24" y="66" width="18" height="6" fill="#222" />
    <path d="M50 58l16-4 6 22-16 2z" fill="#fafafa" />
    <path d="M52 52l16-6 2 8-16 6z" fill="#f19a27" />
  </Icon>
);
const Trash = () => (
  <Icon>
    <defs><linearGradient id="tr" x1="0" x2="1"><stop offset="0" stopColor="#c9cbcc" /><stop offset=".5" stopColor="#f0f0f0" /><stop offset="1" stopColor="#bfc1c2" /></linearGradient></defs>
    <path d="M12 14h56l-6 60a6 6 0 0 1-6 4H24a6 6 0 0 1-6-4z" fill="url(#tr)" />
    <ellipse cx="40" cy="14" rx="28" ry="7" fill="#dcdcdc" />
    <path d="M24 14l8-12 6 12zM42 14l6-12 6 12z" fill="#8b8d90" />
    <circle cx="36" cy="12" r="3" fill="#d0505a" />
  </Icon>
);

/* ---------- data ---------- */
const gh = <FaGithub size={30} color="#161616" />;
const fileIcon = <File size={32} strokeWidth={1.8} color="#4a4a4a" />;

const tabs = [
  { icon: <RedT />, label: "software deve" },
  { icon: <SerifB />, label: "Articles & Pod" },
  { icon: gh, label: "e29_classnote" },
  { icon: gh, label: "e29_classnote" },
  { icon: gh, label: "am4zed/pet_s" },
  { icon: <PetPro />, label: "PetPro Ruby P", noSep: true },
  { icon: <CoolorsMark />, label: "Generate - Co", active: true, noSep: true },
  { icon: fileIcon, label: "NoMethodErr" },
];

const bookmarks = [
  { icon: <AppsGrid />, label: "Apps", w: 136 },
  { icon: <CRing />, label: "Pre-course Work ...", w: 312 },
  { icon: <File size={30} strokeWidth={1.8} color="#333" />, label: "MacMostKeyboar...", w: 308 },
  { icon: <PowerTile />, label: "Mac Keyboard Sh...", w: 306 },
  { icon: <GoogleF />, label: "Google Fonts", w: 234 },
  { icon: <Bird />, label: "Free Fonts! Legit ...", w: 308 },
  { icon: <CoolorsMark s={30} />, label: "Generate - Coolor...", w: 308 },
  { icon: gh, label: "E29 Classnotes", w: 254 },
  { icon: <FormsTile />, label: "E29 Homework Su...", w: 290 },
];

const swatches = [
  { bg: "#41c39b", hex: "41C39B", name: "OCEAN GREEN", fg: "#80d7bb", sub: "#86d8bd", track: 1.5 },
  { bg: "#364156", hex: "364156", name: "CHARCOAL", fg: "#727987", sub: "#7f8695", track: 1.2 },
  { bg: "#ffb7c5", hex: "FFB7C5", name: "CHERRY BLOSSOM PINK", fg: "#5d5462", sub: "#b08f9e", selected: true, track: 2.2 },
  { bg: "#ffffff", hex: "FFFFFF", name: "WHITE", fg: "#bcbcbc", sub: "#c9c9c9", tools: true, track: 5 },
  { bg: "#4d5057", hex: "4D5057", name: "DAVY'S GREY", fg: "#87898f", sub: "#84868c", track: 1.8 },
];

const dockApps = [
  [Finder, 1], [Launchpad, 0], [MailIcon, 1, "5"], [Contacts, 0], [Calendar, 1, "2"], [Notes, 0], [Reminders, 0], [MapsIcon, 0],
  [TablePlus, 1], [Photos, 0], [Messages, 0], [FaceTime, 0], [ChromeIcon, 1], [PagesIcon, 1], [SkypeIcon, 0], [NumbersIcon, 0],
  [KeynoteIcon, 0], [NewsIcon, 0], [MusicIcon, 1], [AppStore, 0, "5"], [Terminal, 1], [SysPrefs, 0, "1"], "sep",
  [Slack, 1, "•"], [AtomIcon, 1], [ColorSync, 1], [Preview, 1], "sep",
  [CodeDoc, 0], [AtomDoc, 0], [SheetDoc, 0], [Trash, 0],
];

const menus = ["File", "Edit", "View", "History", "Bookmarks", "People", "Window", "Help"];

const App = () => {
  return (
    <Desktop>
      <GlobalStyle />
      <MenuBar>
        <FaApple size={32} color="#14142a" />
        <MenuItems>
          <MenuItem $bold>Chrome</MenuItem>
          {menus.map(m => <MenuItem key={m}>{m}</MenuItem>)}
        </MenuItems>
        <MenuRight>
          <FaDropbox size={38} color="#10162c" />
          <Tray $gap={20}><Malware /></Tray>
          <Tray $gap={20}><Avast /></Tray>
          <Tray $gap={30}><Wifi size={38} color="#10162c" strokeWidth={2.4} /></Tray>
          <Tray $gap={24}>14% <Battery /></Tray>
          <Tray $gap={33}><UkFlag /></Tray>
          <Tray $gap={28} $size={27}>Sun 18:03</Tray>
          <Tray $gap={38}><Search size={32} color="#10162c" strokeWidth={2.4} /></Tray>
          <Tray $gap={35}><Siri /></Tray>
          <Tray $gap={24}><ListIcon /></Tray>
        </MenuRight>
      </MenuBar>

      <AtomWindow>
        <AtomTitle />
        <AtomTabs />
        <AtomPanel />
        <Editor>
          <CodeLine $color="#8ebc6e" $top={340}>nam</CodeLine>
          <CodeLine $color="#8ebc6e" $top={282}>me'</CodeLine>
          <CodeLine $color="#5dabe6" $top={414}>ame</CodeLine>
        </Editor>
        <StatusBar>
          <StatusLeft>
            <span>views/new.erb</span>
            <StatusItem $gap={30}><CircleAlert size={24} /> 0</StatusItem>
            <StatusItem><FaExclamationTriangle size={22} /> 0</StatusItem>
            <StatusItem><Info size={24} /> 0</StatusItem>
            <StatusItem $gap={28}>1:1</StatusItem>
          </StatusLeft>
          <StatusRight>
            <GreenDot />
            <span>LF</span>
            <span>UTF-8</span>
            <span>ERB</span>
            <StatusItem><GoGitBranch size={24} /> master</StatusItem>
            <StatusItem><GoSync size={24} /> Fetch</StatusItem>
            <StatusItem><FaGithub size={28} /> GitHub</StatusItem>
            <StatusItem><GoGitCommit size={26} /> Git (7)</StatusItem>
            <StatusItem $color="#4378c8"><GoPackage size={28} /> 3 updates</StatusItem>
            <GiSquirrel size={34} color="#1f80e0" />
          </StatusRight>
        </StatusBar>
      </AtomWindow>

      <BackWindow>
        <BackBar>
          <BackBarLeft>
            <GreyDots><span /><span /></GreyDots>
            <ViewButton><PanelLeft size={30} strokeWidth={1.8} /><ChevronDown size={18} strokeWidth={3} /></ViewButton>
          </BackBarLeft>
          <BackSearch />
        </BackBar>
        <BackBody>
          <Sidebar>
            <SidebarBand><Triangle /> 2.</SidebarBand>
            <Thumbs>
              <Thumb $selected />
              <Thumb $dark />
              <Thumb />
              <Thumb $dark />
            </Thumbs>
          </Sidebar>
          <BackMain>
            <BigSlide>
              <SlideCorner width="72" height="197" viewBox="0 0 72 197">
                <path d="M72 0L28 43V149H0V197H72z" fill="#1b3547" />
              </SlideCorner>
            </BigSlide>
            <NextSlide />
          </BackMain>
        </BackBody>
      </BackWindow>

      <ChromeWindow>
        <TabStrip>
          <Lights>
            <Light $c="#ff5f57" />
            <Light $c="#febc2e" />
            <Light $c="#28c840" />
          </Lights>
          {tabs.map((t, i) => (
            <Tab key={i} $active={t.active} $noSep={t.noSep}>
              <TabIcon>{t.icon}</TabIcon>
              <TabLabel>{t.label}</TabLabel>
              <TabClose><X size={24} strokeWidth={2.2} /></TabClose>
            </Tab>
          ))}
          <NewTab><Plus size={32} strokeWidth={3} /></NewTab>
        </TabStrip>

        <Toolbar>
          <NavBtn><ArrowLeft size={30} strokeWidth={2.4} /></NavBtn>
          <NavBtn $off><ArrowRight size={30} strokeWidth={2.4} /></NavBtn>
          <NavBtn $w={57}><RotateCw size={30} strokeWidth={2.4} /></NavBtn>
          <AddressBar>
            <Lock size={22} fill="#5f6368" strokeWidth={2.5} color="#5f6368" />
            <Url>https://<b>coolors.co</b>/41c39b-364156-ffb7c5-ffffff-4d5057</Url>
            <AddrStar><Star size={30} strokeWidth={2.2} /></AddrStar>
          </AddressBar>
          <Avatar>A</Avatar>
          <Dots><span /><span /><span /></Dots>
        </Toolbar>

        <Bookmarks>
          {bookmarks.map(b => (
            <Bookmark key={b.label} $w={b.w}>
              <BookmarkIcon>{b.icon}</BookmarkIcon>
              {b.label}
            </Bookmark>
          ))}
          <More><ChevronsRight size={26} strokeWidth={2} color="#4a4a4a" /></More>
        </Bookmarks>

        <Header>
          <Logo>coo<LogoL>l</LogoL>ors</Logo>
          <Join>+</Join>
          <MondayBadge><Monday /></MondayBadge>
          <Promo>
            <b>monday</b> - The revolutionary project management tool is here and it’s visual.<br />
            Start Your Free Trial Now. <PromoLink>Start Free Trial<FaCaretRight size={16} /></PromoLink>
          </Promo>
          <Nav>
            <NavActive>Generate</NavActive>
            <NavLink>Explore</NavLink>
            <NavDivider />
            <NavLink>iOS App</NavLink>
            <NavLink>Add-on</NavLink>
            <NavLink>More <FaCaretDown size={26} /></NavLink>
            <NavDivider />
            <NavLink>Login</NavLink>
            <NavLink $blue>Sign Up</NavLink>
          </Nav>
        </Header>

        <ActionBar>
          <Hint>Press the spacebar to generate color schemes!</Hint>
          <Actions>
            <Group $first><FaQuestionCircle size={28} /></Group>
            <Group><FaCog size={28} /></Group>
            <Group><FaCamera size={28} /></Group>
            <Group $off $gap={40}><FaReply size={28} /><FaShare size={28} /></Group>
            <Group $gap={40}><FaEye size={28} /><FaTh size={28} /><Contrast size={28} /></Group>
            <Group $gap={40}>
              <ActionLabel><FaShareAlt size={28} /> Export</ActionLabel>
              <ActionLabel><FaCloudUploadAlt size={30} /> Save</ActionLabel>
            </Group>
            <Group><Burger><span /><span /><span /></Burger></Group>
          </Actions>
        </ActionBar>

        <Palette>
          {swatches.map(s => (
            <Swatch key={s.hex} $bg={s.bg}>
              {s.tools && (
                <Tools>
                  <GridTool />
                  <WidthTool />
                  <SlidersTool />
                  <LockTool />
                </Tools>
              )}
              <Hex $fg={s.fg} $track={s.track}>#<Selected $on={s.selected}>{s.hex}</Selected></Hex>
              <ColorName $fg={s.sub}>{s.name}</ColorName>
            </Swatch>
          ))}
        </Palette>

        <Shelf>
          <ZipIcon><ZipFile /></ZipIcon>
          <FileName>Photos.zip</FileName>
          <ShelfChevron><ChevronUp size={28} strokeWidth={2.4} /></ShelfChevron>
          <ShelfDivider />
          <ShowAll>Show All</ShowAll>
          <ShelfClose><X size={28} strokeWidth={2.2} /></ShelfClose>
        </Shelf>
      </ChromeWindow>

      <Dock>
        {dockApps.map((a, i) => {
          if (a === "sep") return <DockDivider key={i} />;
          const [Art, running, badge] = a;
          return (
            <DockCell key={i}>
              <Art />
              <RunDot $on={running} />
              {badge && <Badge>{badge}</Badge>}
            </DockCell>
          );
        })}
      </Dock>
    </Desktop>
  );
};

export default App;
